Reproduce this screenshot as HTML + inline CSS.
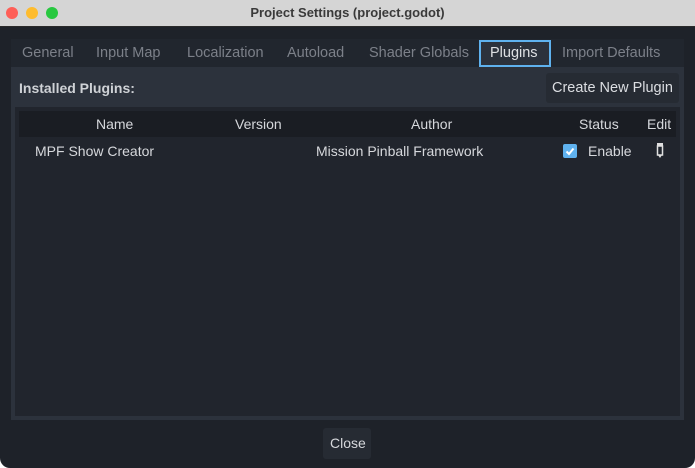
<!DOCTYPE html>
<html><head><style>
*{margin:0;padding:0;box-sizing:border-box}
html{background:#ffffff}
body{width:695px;height:468px;background:#1e2229;font-family:"Liberation Sans","DejaVu Sans",sans-serif;font-size:14px;color:#d6d8dc;position:relative;overflow:hidden;border-radius:10px}
.title{position:absolute;left:0;top:0;width:695px;height:27px;background:#d5d5d5;border-bottom:1px solid #2a2a2a;text-align:center;line-height:26px;font-weight:bold;font-size:13px;color:#3a3a3a}
.dot{position:absolute;top:7px;width:12px;height:12px;border-radius:50%}
.tabs{position:absolute;left:11px;top:39px;width:673px;height:28px;background:#21262e}
.tab{position:absolute;top:0;height:28px;line-height:28px;color:#7c8089;font-size:14.5px}
.sel{border:2px solid #5fb2ef;background:#2c323c;color:#dfe1e4;top:1px;height:27px;line-height:23px;padding:0 9px}
.panel{position:absolute;left:11px;top:67px;width:673px;height:353px;background:#2c323c}
.tree{position:absolute;left:15px;top:107px;width:665px;height:309px;background:#21252d}
.hdr{position:absolute;left:19px;top:111px;width:657px;height:26px;background:#1a1d23}
.t{position:absolute;white-space:nowrap}
.btn{position:absolute;background:#262b33;border-radius:3px}
</style></head><body>
<div class="title">Project Settings (project.godot)
<div class="dot" style="left:6px;background:#fe5f57"></div>
<div class="dot" style="left:26px;background:#febc2e"></div>
<div class="dot" style="left:46px;background:#28c840"></div>
</div>
<div class="tabs">
<span class="tab" style="left:11px">General</span>
<span class="tab" style="left:85px">Input Map</span>
<span class="tab" style="left:176px">Localization</span>
<span class="tab" style="left:276px">Autoload</span>
<span class="tab" style="left:358px">Shader Globals</span>
<span class="tab sel" style="left:468px;width:72px">Plugins</span>
<span class="tab" style="left:551px">Import Defaults</span>
</div>
<div class="panel"></div>
<div class="t" style="left:19px;top:80px;font-weight:bold;color:#cfd2d6">Installed Plugins:</div>
<div class="btn" style="left:546px;top:73px;width:133px;height:30px"></div>
<div class="t" style="left:552px;top:80px;color:#dcdee2;font-size:14.5px">Create New Plugin</div>
<div class="tree"></div>
<div class="hdr"></div>
<div class="t" style="left:96px;top:116px">Name</div>
<div class="t" style="left:235px;top:116px">Version</div>
<div class="t" style="left:411px;top:116px">Author</div>
<div class="t" style="left:579px;top:116px">Status</div>
<div class="t" style="left:647px;top:116px">Edit</div>
<div class="t" style="left:35px;top:143px">MPF Show Creator</div>
<div class="t" style="left:316px;top:143px">Mission Pinball Framework</div>
<div style="position:absolute;left:563px;top:144px;width:14px;height:14px;background:#5fb2ef;border-radius:2px"></div>
<svg style="position:absolute;left:563px;top:144px" width="14" height="14"><path d="M3.5 7.5L6 10L10.5 4.5" stroke="#fff" stroke-width="2" fill="none"/></svg>
<div class="t" style="left:588px;top:143px">Enable</div>
<svg style="position:absolute;left:656px;top:143px" width="8" height="16"><rect x="1.5" y="3" width="5" height="9" fill="none" stroke="#e0e0e0" stroke-width="1.5"/><rect x="1" y="0" width="6" height="3" fill="#e0e0e0"/><path d="M2 12L4 15L6 12Z" fill="#e0e0e0"/></svg>
<div class="btn" style="left:323px;top:428px;width:48px;height:31px"></div>
<div class="t" style="left:330px;top:435px;color:#d6d8dc">Close</div>
</body></html>
